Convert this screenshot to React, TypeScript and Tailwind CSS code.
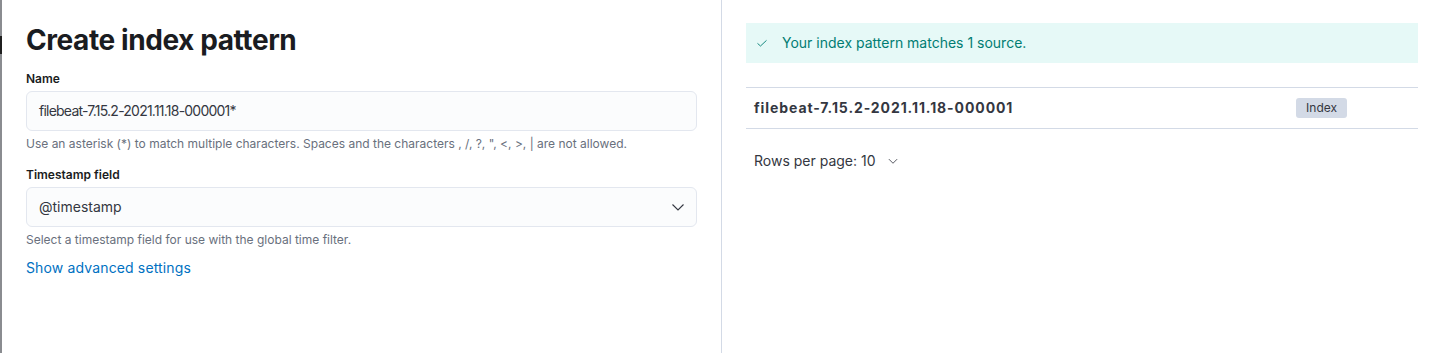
import React from "react";

const ChevronDown = ({ className }: { className?: string }) => (
  <svg viewBox="0 0 16 16" className={className} fill="none" stroke="currentColor" strokeWidth="1.1">
    <path d="M2.5 5.5 L8 11 L13.5 5.5" />
  </svg>
);

const Check = ({ className }: { className?: string }) => (
  <svg viewBox="0 0 16 16" className={className} fill="none" stroke="currentColor" strokeWidth="1.2">
    <path d="M2 8.5 L6 12 L14 4.5" />
  </svg>
);

const App = () => {
  return (
    <div className="flex h-[353px] w-full bg-white font-['Inter',sans-serif] text-[#343741]">
      {/* bit of the page behind the flyout */}
      <div className="flex w-[2px] flex-col bg-[#8a8c90]">
        <div className="mt-[36px] h-[18px] bg-[#1f1f1f]" />
      </div>

      <section className="w-[720px] border-r border-[#d3dae6] px-6 pt-[22px]">
        <h1 className="text-[28px] font-bold leading-[36px] tracking-[-0.015em] text-[#1a1c21]">Create index pattern</h1>

        <div className="mt-[13px]">
          <label className="block text-xs font-semibold leading-[16px] text-[#1a1c21]">Name</label>
          <div className="mt-[4px] flex h-10 items-center rounded-md border border-[#e3e7ef] bg-[#fbfcfd] px-3 text-sm tracking-[-0.055em] text-[#343741]">
            filebeat-7.15.2-2021.11.18-000001*
          </div>
          <p className="mt-[5px] text-xs leading-[16px] text-[#69707d]">
            Use an asterisk (*) to match multiple characters. Spaces and the characters , /, ?, ", &lt;, &gt;, | are not allowed.
          </p>
        </div>

        <div className="mt-[15px]">
          <label className="block text-xs font-semibold leading-[16px] text-[#1a1c21]">Timestamp field</label>
          <div className="mt-[4px] flex h-10 items-center justify-between rounded-md border border-[#e3e7ef] bg-[#fbfcfd] pl-3 pr-[10px] text-sm text-[#343741]">
            <span>@timestamp</span>
            <ChevronDown className="h-4 w-4 text-[#343741]" />
          </div>
          <p className="mt-[5px] text-xs leading-[16px] text-[#69707d]">Select a timestamp field for use with the global time filter.</p>
        </div>

        <a className="mt-[10px] block text-sm leading-[20px] tracking-[0.01em] text-[#0071c2]">Show advanced settings</a>
      </section>

      <section className="flex-1 px-6 pt-[23px] pr-[19px]">
        <div className="flex h-10 items-center gap-[14px] bg-[#e6f9f7] px-[10px] text-sm text-[#017d73]">
          <Check className="h-3 w-3" />
          <span>Your index pattern matches 1 source.</span>
        </div>

        <div className="mt-[24px] flex h-[42px] items-center border-y border-[#d3dae6] px-2">
          <span className="flex-1 text-sm font-bold tracking-[0.065em] text-[#343741]">filebeat-7.15.2-2021.11.18-000001</span>
          <span className="mr-[63px] rounded-[3px] bg-[#d3dae6] px-[10px] text-xs leading-[20px] text-[#343741]">Index</span>
        </div>

        <div className="mt-[22px] flex items-center gap-[11px] px-2 text-sm text-[#343741]">
          <span>Rows per page: 10</span>
          <ChevronDown className="h-3 w-3" />
        </div>
      </section>
    </div>
  );
};

export default App;
